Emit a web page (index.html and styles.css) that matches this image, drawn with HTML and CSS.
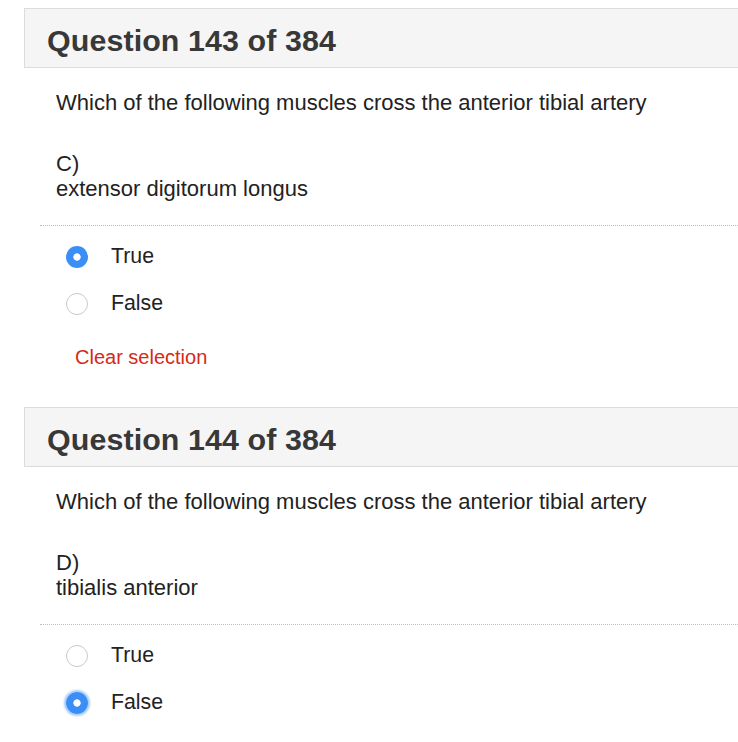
FILE: index.html
```html
<!DOCTYPE html>
<html>
<head>
<meta charset="utf-8">
<link rel="stylesheet" href="styles.css">
</head>
<body>
<div class="page">
  <section class="question">
    <div class="q-header"><h2 class="q-title">Question 143 of 384</h2></div>
    <p class="q-text">Which of the following muscles cross the anterior tibial artery</p>
    <div class="q-option">
      <div>C)</div>
      <div>extensor digitorum longus</div>
    </div>
    <div class="q-sep"></div>
    <div class="q-answers">
      <label class="answer"><input type="radio" name="q143" class="radio" checked><span>True</span></label>
      <label class="answer"><input type="radio" name="q143" class="radio"><span>False</span></label>
    </div>
    <a class="clear">Clear selection</a>
  </section>
  <section class="question">
    <div class="q-header"><h2 class="q-title">Question 144 of 384</h2></div>
    <p class="q-text">Which of the following muscles cross the anterior tibial artery</p>
    <div class="q-option">
      <div>D)</div>
      <div>tibialis anterior</div>
    </div>
    <div class="q-sep"></div>
    <div class="q-answers">
      <label class="answer"><input type="radio" name="q144" class="radio"><span>True</span></label>
      <label class="answer"><input type="radio" name="q144" class="radio focus" checked><span>False</span></label>
    </div>
  </section>
</div>
</body>
</html>
```

FILE: styles.css
```css
html, body {
  margin: 0;
  padding: 0;
  background: #fff;
}
body {
  font-family: "Liberation Sans", Arial, Helvetica, sans-serif;
  color: #222;
  overflow: hidden;
}
.page {
  padding: 8px 0 0 24px;
}
.question {
  margin-bottom: 38px;
}
.q-header {
  height: 58px;
  box-sizing: content-box;
  background: #f5f5f5;
  border: 1px solid #dcdcdc;
  border-right: none;
  display: flex;
  align-items: center;
  padding-left: 22px;
}
.q-title {
  margin: 4px 0 0 0;
  font-size: 30.4px;
  font-weight: bold;
  color: #383838;
  letter-spacing: 0.1px;
}
.q-text {
  margin: 22px 0 0 32px;
  font-size: 22px;
  line-height: 26px;
}
.q-option {
  margin: 35px 0 0 32px;
  font-size: 22px;
  line-height: 25px;
}
.q-sep {
  margin: 24px 0 0 16px;
  border-top: 1px dotted #bdbdbd;
}
.q-answers {
  margin-top: 7px;
  padding-left: 42px;
  display: flex;
  flex-direction: column;
}
.answer {
  height: 47px;
  display: flex;
  align-items: center;
  gap: 23px;
  font-size: 21.3px;
  color: #222;
}
.radio {
  appearance: none;
  -webkit-appearance: none;
  margin: 0;
  width: 22px;
  height: 22px;
  border-radius: 50%;
  border: 1.5px solid #c9c9c9;
  background: #fff;
  box-sizing: border-box;
  flex: none;
}
.radio:checked {
  border: none;
  background: radial-gradient(circle, #fff 0 3.3px, #3a8ef5 4px);
}
.radio.focus {
  box-shadow: 0 0 2px 2px rgba(58, 142, 245, 0.45);
}
.clear {
  display: block;
  margin: 18px 0 0 51px;
  font-size: 20px;
  line-height: 24px;
  color: #d42a17;
}
```
